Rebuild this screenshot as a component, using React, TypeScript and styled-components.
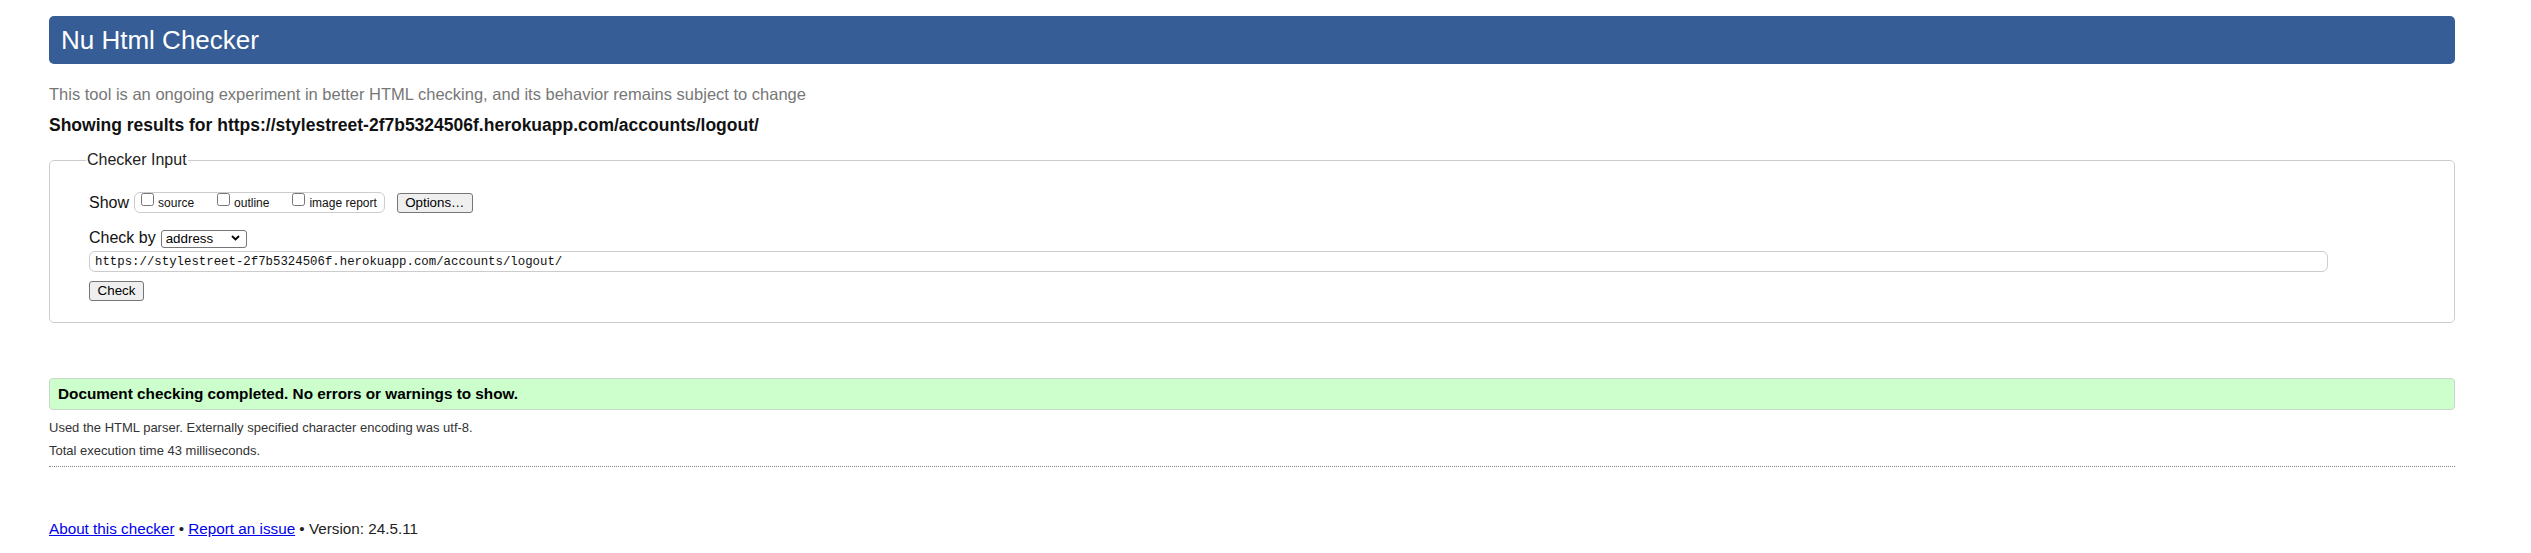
import React from "react";
import styled, { createGlobalStyle } from "styled-components";

const GlobalStyle = createGlobalStyle`
  html, body { margin: 0; padding: 0; background: #fff; }
  body { font-family: "Liberation Sans", Arial, sans-serif; color: #000; }
`;

const Page = styled.div`
  padding: 16px 76px 0 49px;
`;

const Header = styled.h1`
  margin: 0;
  height: 48px;
  line-height: 48px;
  padding: 0 0 0 12px;
  background: #365d95;
  color: #fff;
  font-size: 26px;
  font-weight: normal;
  border-radius: 5px;
`;

const Intro = styled.p`
  margin: 20px 0 0;
  font-size: 16.5px;
  line-height: 20px;
  color: #777;
`;

const Results = styled.p`
  margin: 10px 0 0;
  font-size: 17.5px;
  line-height: 22px;
  font-weight: bold;
  color: #111;
`;

const Fieldset = styled.fieldset`
  margin: 15px 0 0;
  padding: 23px 126px 21px 39px;
  border: 1px solid #ccc;
  border-radius: 5px;
  min-width: 0;
`;

const Legend = styled.legend`
  font-size: 16px;
  line-height: 18px;
  padding: 0 1px;
  margin-left: -3px;
  color: #222;
`;

const Row = styled.div<{ $mt?: number; $h: number }>`
  display: flex;
  align-items: center;
  height: ${(p) => p.$h}px;
  margin-top: ${(p) => p.$mt ?? 0}px;
`;

const RowLabel = styled.span`
  font-size: 16px;
  line-height: 18px;
  margin-right: 5px;
  color: #111;
`;

const CheckGroup = styled.span`
  box-sizing: border-box;
  display: inline-flex;
  align-items: flex-start;
  height: 21px;
  padding: 0 7px 0 6px;
  border: 1px solid #ccc;
  border-radius: 6px;
  gap: 23px;
`;

const CheckLabel = styled.label`
  display: inline-flex;
  align-items: flex-start;
`;

const Checkbox = styled.input.attrs({ type: "checkbox" })`
  width: 13px;
  height: 13px;
  margin: 0 4px 0 0;
`;

const CheckText = styled.span`
  font-size: 12px;
  line-height: 14px;
  margin-top: 3px;
  color: #111;
`;

const Button = styled.button<{ $w: number }>`
  box-sizing: border-box;
  height: 20px;
  width: ${(p) => p.$w}px;
  padding: 0;
  font-family: "Liberation Sans", Arial, sans-serif;
  font-size: 13.33px;
  line-height: 18px;
  color: #000;
  background: #efefef;
  border: 1px solid #767676;
  border-radius: 3px;
`;

const OptionsButton = styled(Button)`
  margin-left: 12px;
`;

const SelectWrap = styled.span`
  position: relative;
  display: inline-block;
  height: 18px;
`;

const Select = styled.select`
  appearance: none;
  box-sizing: border-box;
  width: 86px;
  height: 18px;
  padding: 0 0 0 4px;
  font-family: "Liberation Sans", Arial, sans-serif;
  font-size: 13.33px;
  line-height: 16px;
  color: #000;
  background: #fff;
  border: 1px solid #767676;
  border-radius: 3px;
`;

const Chevron = styled.svg`
  position: absolute;
  right: 7px;
  top: 6px;
  pointer-events: none;
`;

const UrlInput = styled.input`
  display: block;
  box-sizing: border-box;
  width: 100%;
  height: 21px;
  margin-top: 4px;
  padding: 0 0 0 5px;
  font-family: "Liberation Mono", "Courier New", monospace;
  font-size: 12.37px;
  color: #111;
  border: 1px solid #ccc;
  border-radius: 6px;
  outline: none;
`;

const CheckButton = styled(Button)`
  display: block;
  margin-top: 9px;
`;

const Success = styled.div`
  box-sizing: border-box;
  margin-top: 55px;
  height: 32px;
  padding: 0 0 0 8px;
  line-height: 30px;
  font-size: 15.3px;
  font-weight: bold;
  background: #ccffcc;
  border: 1px solid #c8d8c8;
  border-radius: 4px;
  color: #000;
`;

const Detail = styled.p<{ $mt: number }>`
  margin: ${(p) => p.$mt}px 0 0;
  font-size: 13px;
  line-height: 18px;
  color: #333;
`;

const Rule = styled.hr`
  margin: 6px 0 0;
  border: 0;
  border-top: 1px dotted #888;
  height: 0;
`;

const Footer = styled.p`
  margin: 53.5px 0 0;
  font-size: 15.25px;
  line-height: 18px;
  color: #222;
`;

const Link = styled.a`
  color: #0000ee;
  text-decoration: underline;
`;

export default function App() {
  return (
    <>
      <GlobalStyle />
      <Page>
        <Header>Nu Html Checker</Header>
        <Intro>
          This tool is an ongoing experiment in better HTML checking, and its behavior remains subject to change
        </Intro>
        <Results>Showing results for https://stylestreet-2f7b5324506f.herokuapp.com/accounts/logout/</Results>
        <Fieldset>
          <Legend>Checker Input</Legend>
          <Row $h={21}>
            <RowLabel>Show</RowLabel>
            <CheckGroup>
              <CheckLabel>
                <Checkbox />
                <CheckText>source</CheckText>
              </CheckLabel>
              <CheckLabel>
                <Checkbox />
                <CheckText>outline</CheckText>
              </CheckLabel>
              <CheckLabel>
                <Checkbox />
                <CheckText>image report</CheckText>
              </CheckLabel>
            </CheckGroup>
            <OptionsButton $w={76}>Options…</OptionsButton>
          </Row>
          <Row $h={18} $mt={16}>
            <RowLabel>Check by</RowLabel>
            <SelectWrap>
              <Select defaultValue="address">
                <option value="address">address</option>
                <option value="file">file upload</option>
                <option value="text">text input</option>
              </Select>
              <Chevron width="9" height="6" viewBox="0 0 9 6">
                <path d="M1 1 L4.5 4.5 L8 1" fill="none" stroke="#000" strokeWidth="1.8" />
              </Chevron>
            </SelectWrap>
          </Row>
          <UrlInput defaultValue="https://stylestreet-2f7b5324506f.herokuapp.com/accounts/logout/" />
          <CheckButton $w={55}>Check</CheckButton>
        </Fieldset>
        <Success>Document checking completed. No errors or warnings to show.</Success>
        <Detail $mt={9}>Used the HTML parser. Externally specified character encoding was utf-8.</Detail>
        <Detail $mt={4.5}>Total execution time 43 milliseconds.</Detail>
        <Rule />
        <Footer>
          <Link href="#">About this checker</Link> • <Link href="#">Report an issue</Link> • Version: 24.5.11
        </Footer>
      </Page>
    </>
  );
}
